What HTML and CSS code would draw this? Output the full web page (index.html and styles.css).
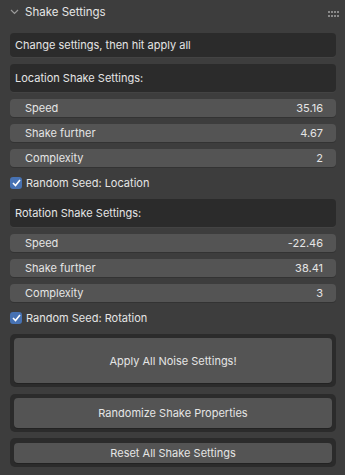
FILE: index.html
```html
<!DOCTYPE html>
<html lang="en">
<head>
    <meta charset="UTF-8">
    <title>Shake Settings</title>
    <link rel="stylesheet" href="styles.css">
</head>
<body>
<div class="panel">
    <div class="panel-head">
        <svg class="chevron" width="9" height="6" viewBox="0 0 9 6">
            <path d="M1 1 L4.5 4.5 L8 1" fill="none" stroke="#9a9a9a" stroke-width="1.2"/>
        </svg>
        <span class="panel-title">Shake Settings</span>
        <svg class="grip" width="12" height="6" viewBox="0 0 12 6">
            <g fill="#8a8a8a">
                <rect x="0" y="0" width="2" height="2"/><rect x="3" y="0" width="2" height="2"/>
                <rect x="6" y="0" width="2" height="2"/><rect x="9" y="0" width="2" height="2"/>
                <rect x="0" y="4" width="2" height="2"/><rect x="3" y="4" width="2" height="2"/>
                <rect x="6" y="4" width="2" height="2"/><rect x="9" y="4" width="2" height="2"/>
            </g>
        </svg>
    </div>

    <div class="panel-body">
        <div class="label-box first">Change settings, then hit apply all</div>
        <div class="label-box tall">Location Shake Settings:</div>

        <div class="field"><span>Speed</span><span>35.16</span></div>
        <div class="field"><span>Shake further</span><span>4.67</span></div>
        <div class="field"><span>Complexity</span><span>2</span></div>

        <label class="check"><span class="box"><svg width="9" height="8" viewBox="0 0 9 8"><path d="M1 4 L3.5 6.5 L8 1" fill="none" stroke="#fff" stroke-width="1.6"/></svg></span>Random Seed: Location</label>

        <div class="label-box tall after-check">Rotation Shake Settings:</div>

        <div class="field"><span>Speed</span><span>-22.46</span></div>
        <div class="field"><span>Shake further</span><span>38.41</span></div>
        <div class="field"><span>Complexity</span><span>3</span></div>

        <label class="check"><span class="box"><svg width="9" height="8" viewBox="0 0 9 8"><path d="M1 4 L3.5 6.5 L8 1" fill="none" stroke="#fff" stroke-width="1.6"/></svg></span>Random Seed: Rotation</label>

        <div class="btn-box big"><button>Apply All Noise Settings!</button></div>
        <div class="btn-box mid"><button>Randomize Shake Properties</button></div>
        <div class="btn-box small"><button>Reset All Shake Settings</button></div>
    </div>
</div>
</body>
</html>
```

FILE: styles.css
```css
* {
    margin: 0;
    padding: 0;
    box-sizing: border-box;
}

body {
    background: #3d3d3d;
    font-family: Inter, "DejaVu Sans", sans-serif;
    font-size: 11px;
    color: #e5e5e5;
    width: 345px;
    height: 475px;
    overflow: hidden;
}

.panel-head {
    display: flex;
    align-items: center;
    height: 24px;
    padding: 0 5px 0 10px;
}

.chevron {
    margin-right: 6px;
}

.panel-title {
    flex: 1;
    font-size: 11.5px;
}

.grip {
    margin-top: 3px;
}

.panel-body {
    display: flex;
    flex-direction: column;
    padding: 0 9px 0 10px;
}

.label-box {
    background: #2b2b2b;
    border-radius: 4px;
    height: 24px;
    display: flex;
    align-items: center;
    padding-left: 5px;
    margin-top: 7px;
    box-shadow: 0 1px 0 #434343;
}

.label-box.first {
    margin-top: 9px;
}

.label-box.tall {
    height: 28px;
}

.label-box.after-check {
    margin-top: 10px;
}

.field {
    display: flex;
    justify-content: space-between;
    align-items: center;
    height: 18px;
    margin-top: 7px;
    padding: 0 13px 0 15px;
    background: #545454;
    border-radius: 4px;
    box-shadow: 0 1px 0 #333;
}

.check {
    display: flex;
    align-items: center;
    height: 12px;
    margin-top: 10px;
}

.check .box {
    width: 12px;
    height: 12px;
    border-radius: 3px;
    background: #4772b3;
    display: flex;
    align-items: center;
    justify-content: center;
    margin-right: 4px;
}

.btn-box {
    background: #2b2b2b;
    border-radius: 5px;
    padding: 4px;
    display: flex;
}

.btn-box button {
    flex: 1;
    background: #545454;
    border: none;
    border-radius: 4px;
    color: #e5e5e5;
    font-family: inherit;
    font-size: 11px;
    box-shadow: 0 1px 0 #222;
}

.btn-box.big {
    height: 53px;
    margin-top: 10px;
}

.btn-box.mid {
    height: 38px;
    margin-top: 7px;
}

.btn-box.small {
    height: 29px;
    margin-top: 6px;
    padding-top: 5px;
}
```
